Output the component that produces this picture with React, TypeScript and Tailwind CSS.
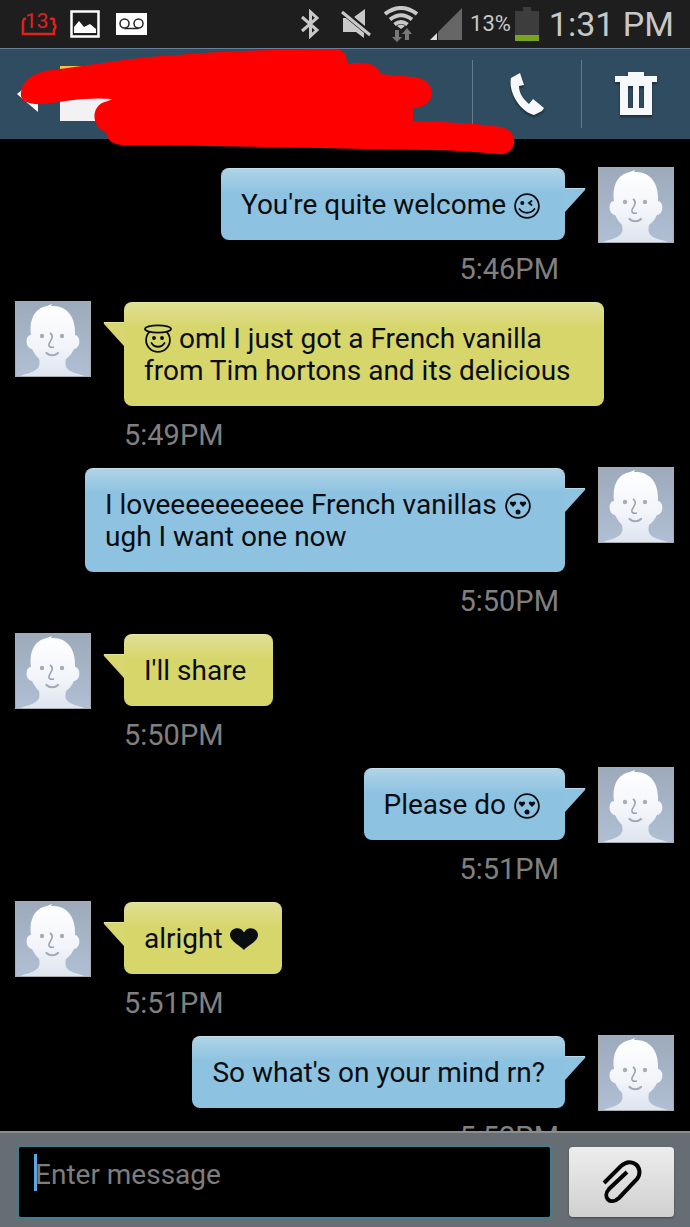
import type { ReactNode } from 'react';

type Mood = 'wink' | 'angel' | 'love';

type Message = {
  id: number;
  mine: boolean;
  body: ReactNode;
  time: string;
};

const Face = ({ mood }: { mood: Mood }) => (
  <svg
    viewBox="0 0 28 30"
    className={mood === 'angel' ? '-mt-1 inline-block h-[30px] w-7' : '-mt-1 mr-1 inline-block h-[30px] w-7'}
    fill="none"
    stroke="currentColor"
    strokeWidth="1.8"
    strokeLinecap="round"
    role="img"
    aria-label={mood}
  >
    <circle cx="14" cy="16" r="11.9" />
    {mood === 'wink' && (
      <>
        <circle cx="9.3" cy="13" r="1.1" fill="currentColor" />
        <path d="M18.5 11l-2.5 2 2.500 2M6.500 19c3.500 5 11.500 5 15 0" />
      </>
    )}
    {mood === 'angel' && (
      <>
        <ellipse cx="14" cy="5" rx="13" ry="3.600" fill="#d8d76d" />
        <circle cx="10" cy="14" r="1" fill="currentColor" />
        <circle cx="18" cy="14" r="1" fill="currentColor" />
        <path d="M7.500 19c3 5 10 5 13 0" />
      </>
    )}
    {mood === 'love' && (
      <g fill="currentColor" stroke="none">
        <path d="M9 17l-2.700-2.800c-1.600-1.800.9-4 2.700-1.900 1.800-2.100 4.300.1 2.700 1.900z" />
        <path d="M19 17l-2.700-2.800c-1.600-1.800.9-4 2.700-1.900 1.800-2.100 4.300.1 2.700 1.900z" />
        <circle cx="14" cy="22" r="2.500" />
      </g>
    )}
  </svg>
);

const Heart = () => (
  <svg viewBox="0 0 28 24" className="-mt-1 mr-1 inline-block h-6 w-7" fill="currentColor" role="img" aria-label="heart">
    <path d="M14 23C11 19 0 14.500 0 8 0 .5 11-1.500 14 5.500 17-1.500 28 .5 28 8c0 6.500-11 11-14 15z" />
  </svg>
);

const messages: Message[] = [
  { id: 1, mine: true, body: <>You're quite welcome <Face mood="wink" /></>, time: '5:46PM' },
  { id: 2, mine: false, body: <><Face mood="angel" /> oml I just got a French vanilla from Tim hortons and its delicious</>, time: '5:49PM' },
  { id: 3, mine: true, body: <>I loveeeeeeeeee French vanillas <Face mood="love" /> ugh I want one now</>, time: '5:50PM' },
  { id: 4, mine: false, body: <>I'll share&nbsp;</>, time: '5:50PM' },
  { id: 5, mine: true, body: <>Please do <Face mood="love" /></>, time: '5:51PM' },
  { id: 6, mine: false, body: <>alright <Heart /></>, time: '5:51PM' },
  { id: 7, mine: true, body: <>So what's on your mind rn?</>, time: '5:52PM' },
];

const Avatar = () => (
  <svg viewBox="0 0 76 76" className="size-[76px] shrink-0" aria-hidden="true">
    <defs>
      <linearGradient id="avatar-bg" x1="0" y1="0" x2="0" y2="1">
        <stop offset="0" stopColor="#9caabb" />
        <stop offset="1" stopColor="#b0bfd3" />
      </linearGradient>
      <linearGradient id="avatar-skin" x1="0" y1="0" x2="0" y2="1">
        <stop offset="0" stopColor="#ffffff" />
        <stop offset=".6" stopColor="#f1f4f9" />
        <stop offset="1" stopColor="#dde4ee" />
      </linearGradient>
    </defs>
    <path fill="url(#avatar-bg)" d="M0 0h76v76H0z" />
    <path
      fill="url(#avatar-skin)"
      d="M4 76c4-3 10-3 15-6 6-3 6-7 5-12-3-3-5-6-7-10-7-1-7-14-1-14C14 18 20 7 32 5l5-2-1 2c16-1 25 11 24 29 6 1 6 13-1 14-2 4-4 7-8 10-1 5-1 9 4 12 5 3 11 3 17 6z"
    />
    <circle cx="27" cy="35" r="2.200" fill="#a5adb9" />
    <circle cx="47" cy="35" r="2.200" fill="#a5adb9" />
    <path fill="none" stroke="#9aa2b0" strokeWidth="1.600" d="M35 32q3 2 2 5l-3 6q-1 4 5 3" />
    <path fill="none" stroke="#a2aab6" strokeWidth="2.200" strokeLinecap="round" d="M31.500 52c3 3 8.500 3 11.500 0" />
    <path fill="none" stroke="#a9adb2" d="M.5.5h75v75H.5z" />
  </svg>
);

const Bubble = ({ mine, children }: { mine: boolean; children: ReactNode }) => (
  <div
    className={
      mine
        ? 'relative max-w-[480px] rounded-lg border-t border-[#c3dfee] bg-linear-to-b from-[#b0d4e8] to-[#8dc2e0] to-[24px] px-5 pt-5 pb-[19px]'
        : 'relative max-w-[480px] rounded-lg border-t border-[#e6e6a4] bg-linear-to-b from-[#dfdf94] to-[#d7d66b] to-[24px] px-5 pt-5 pb-[19px]'
    }
  >
    <p className="text-[28px] leading-8 text-[#0a0d10]">{children}</p>
    {mine ? (
      <svg viewBox="0 0 22 26" className="absolute top-[19px] -right-[21px] h-[26px] w-[22px]" aria-hidden="true">
        <path fill="#8fc4e1" d="M0 0h20q2 0 1 2L1 24H0z" />
        <path stroke="#b7d9ec" d="M1 .5h20" />
      </svg>
    ) : (
      <svg viewBox="0 0 22 26" className="absolute top-[19px] -left-[21px] h-[26px] w-[22px]" aria-hidden="true">
        <path fill="#d8d76f" d="M22 0H2Q0 0 1 2l20 22h1z" />
        <path stroke="#e3e39c" d="M1 .5h20" />
      </svg>
    )}
  </div>
);

const MessageRow = ({ message }: { message: Message }) => (
  <li className={message.mine ? 'flex flex-row-reverse items-start gap-[33px]' : 'flex items-start gap-[33px]'}>
    <Avatar />
    <div className={message.mine ? 'flex flex-col items-end gap-[13px] pt-px' : 'flex flex-col items-start gap-[13px] pt-px'}>
      <Bubble mine={message.mine}>{message.body}</Bubble>
      <time className={message.mine ? 'pr-1.5 text-[29px] leading-8 text-[#808080]' : 'text-[29px] leading-8 text-[#808080]'}>{message.time}</time>
    </div>
  </li>
);

const StatusBar = () => (
  <div className="flex h-12 shrink-0 items-center justify-between bg-[#1e1e1e] pr-4 pl-5 text-[#c8c8c8]">
    <div className="flex items-center gap-3">
      <svg viewBox="0 0 38 30" className="h-[30px] w-[38px]" aria-hidden="true">
        <path fill="none" stroke="#e3211c" strokeWidth="2.500" d="M6 10Q3 9 3 14v11h31v-4q3-4 0-6v-4q0-2-4-1" />
        <text x="5" y="19" fontSize="21" fill="#e3211c" fontFamily="Roboto, sans-serif">13</text>
      </svg>
      <svg viewBox="0 0 30 28" className="h-7 w-[30px]" aria-hidden="true">
        <path fill="none" stroke="#fff" strokeWidth="2.500" d="M1.500 1.500h27v25h-27z" />
        <path fill="#fff" d="M4 23v-6l5-6 5 6 6-3 6 5v4z" />
      </svg>
      <svg viewBox="0 0 40 24" className="h-6 w-10" aria-hidden="true">
        <path fill="#fff" d="M4 1h31v22H4z" />
        <g fill="none" stroke="#262626" strokeWidth="1.500">
          <circle cx="12.500" cy="11.500" r="4.500" />
          <circle cx="26.500" cy="11.500" r="4.500" />
          <path d="M12.500 16.500h14" />
        </g>
      </svg>
    </div>
    <div className="flex items-center">
      <svg viewBox="0 0 20 30" className="mr-5 h-[30px] w-5" fill="none" stroke="currentColor" strokeWidth="3" aria-hidden="true">
        <path d="M2 8l15 13-6.500 6V3L17 9 2 22" />
      </svg>
      <svg viewBox="0 0 32 30" className="mr-3 h-[30px] w-8" aria-hidden="true">
        <path fill="currentColor" d="M3 9h7l14 14v6l-8-6H3zM14 8l11-8v19z" />
        <path stroke="#1e1e1e" strokeWidth="6" d="M2 2l28 23" />
        <path stroke="currentColor" strokeWidth="3" d="M2 3l28 23" />
      </svg>
      <svg viewBox="0 0 34 36" className="mr-3 h-9 w-[34px]" fill="none" aria-hidden="true">
        <g stroke="currentColor" strokeWidth="4">
          <path d="M1 8Q17-4 33 8" />
          <path d="M6 13.500Q17 5 28 13.500" />
          <path d="M10.500 18.500Q17 13.500 23.500 18.500" />
        </g>
        <path fill="currentColor" d="M13 20q4-3 8 0l-4 3z" />
        <path fill="#777" d="M11 24h4v7h3l-5 5-5-5h3zM21 34v-6h-3l5-6 5 6h-3v6z" />
      </svg>
      <svg viewBox="0 0 32 32" className="mr-2 h-8 w-8" aria-hidden="true">
        <path fill="#666" d="M32 0v32H8V24z" />
        <path fill="#ddd" d="M0 32l7-7v7z" />
      </svg>
      <span className="mr-1 text-[22px] leading-8">13%</span>
      <svg viewBox="0 0 24 34" className="mr-2.5 h-[34px] w-6" aria-hidden="true">
        <path fill="#3d3d3d" d="M8 0h8v4h8v25H0V4h8z" />
        <path fill="#79a51a" d="M0 28h24v6H0z" />
      </svg>
      <span className="text-[34px] leading-[46px]">1:31 PM</span>
    </div>
  </div>
);

const Header = () => (
  <header className="relative flex h-[91px] shrink-0 items-stretch border-t border-[#66809a] bg-[#304c60]">
    <button type="button" aria-label="Back" className="flex flex-1 items-center gap-5 pl-[17px]">
      <svg viewBox="0 0 22 38" className="h-[38px] w-[22px]" aria-hidden="true">
        <path fill="#fff" d="M0 19L21 2v35z" />
      </svg>
      <svg viewBox="0 0 56 56" className="size-14" aria-hidden="true">
        <path fill="#f2f2f4" d="M1 0h55v55H1z" />
        <path fill="#f3c338" d="M1 0h55v4H1z" />
      </svg>
    </button>
    <button type="button" aria-label="Call" className="my-[11px] flex w-[109px] items-center justify-center border-l border-[#647c8e]">
      <svg viewBox="0 0 36 46" className="h-[46px] w-9 drop-shadow-[0_2px_1px_#1b2d3a]" aria-hidden="true">
        <path fill="#f7f8fa" d="M2 7l9-5 4 12-5 1c0 7 4 13 10 18l4-5 11 9-2 3-8 4C12 41-1 22 2 7z" />
      </svg>
    </button>
    <button type="button" aria-label="Delete" className="my-[11px] flex w-[109px] items-center justify-center border-l border-[#647c8e]">
      <svg viewBox="0 0 44 44" className="size-11 drop-shadow-[0_2px_1px_#1b2d3a]" aria-hidden="true">
        <path fill="#f7f8fa" fillRule="evenodd" d="M14 0h16v4h13v6h-5v33H6V10H1V4h13zM14 14v22h5V14zm11 0v22h5V14z" />
      </svg>
    </button>
    <svg viewBox="0 0 500 108" className="pointer-events-none absolute top-0 left-[17px] z-10 h-[108px] w-[500px]" aria-hidden="true">
      <path
        fill="#f00"
        d="M4 43C6 30 17 25 28 22 70 17 110 9 160 6 210 2 270 0 318 0q11 0 13 15 26-5 33 10c18 2 34 2 41 5 13 6 14 24-3 28l-6 1v13c30 1 60 2 88 6 20 4 16 30-3 27-23-2-46-4-70-4-90-1-180-4-305-5-10 0-16-5-17-13-13-4-16-22-4-29 4-2 5-1 10-4C70 48 50 52 26 55 12 56 2 52 4 43z"
      />
    </svg>
  </header>
);

const Composer = () => (
  <form className="flex h-24 shrink-0 items-center gap-[17px] border-t-2 border-[#8b8e8f] bg-[#666e74] pt-1 pr-4 pl-[17px]" onSubmit={(e) => e.preventDefault()}>
    <div className="relative flex flex-1">
      <textarea
        aria-label="Message"
        placeholder="Enter message"
        className="h-[74px] w-full resize-none overflow-hidden rounded border-2 border-[#3c8090] bg-black py-2.5 pl-4 text-[28px] leading-9 text-white outline-none placeholder:text-[#7d7d7d]"
      />
      <span className="absolute top-[9px] left-[17px] h-[37px] w-[3px] bg-[#5ba5e2]" />
    </div>
    <button type="button" aria-label="Attach" className="flex h-[70px] w-[105px] items-center justify-center rounded bg-linear-to-b from-[#ededed] to-[#d0d0d0] shadow-[0_1px_2px_#444]">
      <svg viewBox="0 0 42 46" className="h-[46px] w-[42px]" fill="none" stroke="#050505" strokeWidth="4" aria-hidden="true">
        <path d="M3 24L20 7C31-3 44 9 36 20L18 39C9 47 1 38 8 30L26 13" />
      </svg>
    </button>
  </form>
);

const App = () => {
  return (
    <div className="flex h-screen flex-col overflow-hidden bg-black font-[Roboto,'Liberation_Sans',sans-serif]">
      <StatusBar />
      <Header />
      <main className="min-h-0 flex-1 overflow-hidden px-[15px] pt-7">
        <ul className="flex flex-col gap-4 pr-px">
          {messages.map((message) => (
            <MessageRow key={message.id} message={message} />
          ))}
        </ul>
      </main>
      <Composer />
    </div>
  );
};

export default App;
